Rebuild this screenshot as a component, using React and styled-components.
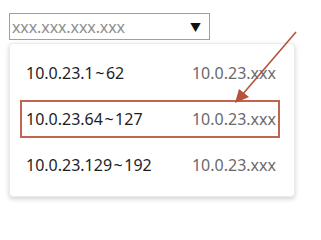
import React from "react";
import styled, { createGlobalStyle } from "styled-components";

const Global = createGlobalStyle`
  html, body { margin: 0; padding: 0; background: #ffffff; }
  body { font-family: "Noto Sans", "Noto Sans CJK SC", sans-serif; }
`;

const Page = styled.div`
  position: relative;
  width: 321px;
  height: 224px;
  padding: 13px 0 0 9px;
  box-sizing: border-box;
  overflow: hidden;
`;

const SelectBox = styled.div`
  box-sizing: border-box;
  width: 201px;
  height: 27px;
  border: 1px solid #86a3c9;
  background: #fff;
  display: flex;
  align-items: center;
  justify-content: space-between;
  padding: 0 8px 0 2px;
`;

const Placeholder = styled.span`
  font-size: 16px;
  color: #8e8e8e;
  line-height: 1;
  letter-spacing: -0.1px;
`;

const Caret = styled.span`
  font-size: 11px;
  color: #111;
  line-height: 1;
  margin-top: 1px;
`;

const Panel = styled.div`
  box-sizing: border-box;
  width: 286px;
  margin-top: 3px;
  padding: 10px 14px 12px 10px;
  background: #fff;
  border-radius: 4px;
  border: 1px solid #ececec;
  box-shadow: 0 2px 5px rgba(0, 0, 0, 0.18);
  display: flex;
  flex-direction: column;
  gap: 8px;
`;

const Row = styled.div`
  box-sizing: border-box;
  height: 38px;
  border: 2px solid ${(p) => (p.$marked ? "#c0654f" : "transparent")};
  display: flex;
  align-items: center;
  justify-content: space-between;
  padding: 0 2px 0 4px;
`;

const Range = styled.span`
  font-size: 16px;
  color: #1e1e1e;
  line-height: 1;
`;

const Tilde = styled.span`
  margin: 0 1.5px;
`;

const Subnet = styled.span`
  font-size: 16px;
  color: #6a6a6a;
  line-height: 1;
`;

const Annotation = styled.svg`
  position: absolute;
  left: 0;
  top: 0;
  pointer-events: none;
`;

const rows = [
  { from: "10.0.23.1", to: "62", subnet: "10.0.23.xxx" },
  { from: "10.0.23.64", to: "127", subnet: "10.0.23.xxx", marked: true },
  { from: "10.0.23.129", to: "192", subnet: "10.0.23.xxx" },
];

export default function App() {
  return (
    <>
      <Global />
      <Page>
        <SelectBox>
          <Placeholder>xxx.xxx.xxx.xxx</Placeholder>
          <Caret>▼</Caret>
        </SelectBox>
        <Panel>
          {rows.map((r) => (
            <Row key={r.from} $marked={r.marked}>
              <Range>
                {r.from}
                <Tilde>~</Tilde>
                {r.to}
              </Range>
              <Subnet>{r.subnet}</Subnet>
            </Row>
          ))}
        </Panel>
        <Annotation width="321" height="224" viewBox="0 0 321 224">
          <line x1="296" y1="32" x2="242" y2="95" stroke="#b4533a" strokeWidth="1.6" />
          <polygon points="235,103 239,89 249,97" fill="#b4533a" />
        </Annotation>
      </Page>
    </>
  );
}
